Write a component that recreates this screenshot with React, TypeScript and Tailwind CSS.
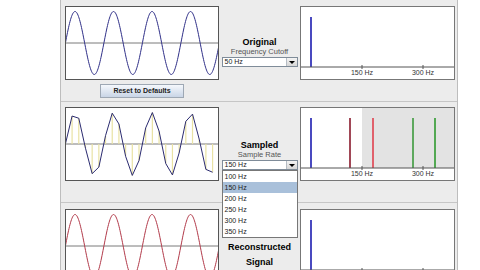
import React from 'react';

const PLOT_W = 154;
const PLOT_H = 74;
const PERIOD = 38.5;
const AMP = 31.5;

function sineAt(x: number) {
  return PLOT_H / 2 - AMP * Math.sin((2 * Math.PI * (x - 0.4)) / PERIOD);
}

function sinePoints() {
  const pts: string[] = [];
  for (let x = 0; x <= PLOT_W; x += 0.5) {
    pts.push(`${x.toFixed(1)},${sineAt(x).toFixed(2)}`);
  }
  return pts.join(' ');
}

function WavePlot({ color, sampled }: { color: string; sampled?: boolean }) {
  const samples: { x: number; y: number }[] = [];
  if (sampled) {
    for (let k = 0; k * 6.69 <= PLOT_W - 4; k++) {
      const x = 0.4 + k * 6.69;
      samples.push({ x, y: sineAt(x) });
    }
  }
  return (
    <svg width={PLOT_W} height={PLOT_H} className="block bg-white">
      <line x1={0} y1={PLOT_H / 2} x2={PLOT_W} y2={PLOT_H / 2} stroke="#7a7a7a" strokeWidth={1} />
      {sampled ? (
        <>
          {samples.map((s, i) => (
            <line key={i} x1={s.x} y1={PLOT_H / 2} x2={s.x} y2={s.y} stroke="#e9e2a4" strokeWidth={1.2} />
          ))}
          <polyline
            points={samples.map((s) => `${s.x},${s.y}`).join(' ')}
            fill="none"
            stroke={color}
            strokeWidth={1}
          />
        </>
      ) : (
        <polyline points={sinePoints()} fill="none" stroke={color} strokeWidth={1} />
      )}
      <rect x={0.5} y={0.5} width={PLOT_W - 1} height={PLOT_H - 1} fill="none" stroke="#555" />
    </svg>
  );
}

type Spike = { x: number; color: string };

function Spectrum({ spikes, shaded, labels = true }: { spikes: Spike[]; shaded?: boolean; labels?: boolean }) {
  const w = 155;
  const h = 74;
  const axis = 61;
  return (
    <svg width={w} height={h} className="block bg-white">
      {shaded && <rect x={62} y={1} width={w - 63} height={axis - 1} fill="#e3e3e3" />}
      {spikes.map((s, i) => (
        <line key={i} x1={s.x} y1={11} x2={s.x} y2={axis} stroke={s.color} strokeWidth={1.6} />
      ))}
      <line x1={0} y1={axis} x2={w} y2={axis} stroke="#555" strokeWidth={1} />
      <line x1={62} y1={axis - 2} x2={62} y2={axis + 2} stroke="#555" />
      <line x1={123} y1={axis - 2} x2={123} y2={axis + 2} stroke="#555" />
      {labels && (
        <>
          <text x={62} y={69} fontSize={7} textAnchor="middle" fill="#333" fontFamily="Liberation Sans, Arial, sans-serif">
            150 Hz
          </text>
          <text x={123} y={69} fontSize={7} textAnchor="middle" fill="#333" fontFamily="Liberation Sans, Arial, sans-serif">
            300 Hz
          </text>
        </>
      )}
      <rect x={0.5} y={0.5} width={w - 1} height={h - 1} fill="none" stroke="#777" />
    </svg>
  );
}

function Dropdown({ value }: { value: string }) {
  return (
    <div className="flex h-[10px] w-[76px] items-stretch border border-[#7f8c99] bg-white">
      <span className="flex-1 pl-[2px] text-[7px] leading-[8px] text-[#222]">{value}</span>
      <span className="flex w-[11px] items-center justify-center border-l border-[#b5bcc4] bg-gradient-to-b from-[#f4f4f4] to-[#d6d6d6]">
        <span className="h-0 w-0 border-x-[3px] border-t-[3px] border-x-transparent border-t-black" />
      </span>
    </div>
  );
}

const rates = ['100 Hz', '150 Hz', '200 Hz', '250 Hz', '300 Hz', '350 Hz'];

export default function App() {
  return (
    <div className="h-[270px] overflow-hidden bg-white font-['Liberation_Sans',Arial,sans-serif]">
      <div className="ml-[60px] w-[398px] border-x border-[#bdbdbd] bg-[#ececec]">
        {/* Original */}
        <div className="flex h-[102px] border-b border-[#c6c6c6] pt-[6px]">
          <div className="ml-[4px] flex w-[154px] flex-col items-center">
            <WavePlot color="#2f2f88" />
            <button className="mt-[4px] h-[14px] w-[84px] border border-[#9ea8b4] bg-gradient-to-b from-[#f5f8fc] to-[#c9d5e6] text-[7px] font-bold text-[#222]">
              Reset to Defaults
            </button>
          </div>
          <div className="flex w-[81px] flex-col items-center pt-[31px]">
            <div className="text-[9px] leading-[10px] font-bold text-black">Original</div>
            <div className="mt-[1px] text-[7.5px] leading-[8px] text-[#555]">Frequency Cutoff</div>
            <div className="mt-[1px]">
              <Dropdown value="50 Hz" />
            </div>
          </div>
          <Spectrum spikes={[{ x: 11, color: '#1c1cb0' }]} />
        </div>

        {/* Sampled */}
        <div className="flex h-[101px] border-b border-[#c6c6c6] pt-[5px]">
          <div className="ml-[4px] w-[154px]">
            <WavePlot color="#2b2b70" sampled />
          </div>
          <div className="flex w-[81px] flex-col items-center pt-[33px]">
            <div className="text-[9px] leading-[10px] font-bold text-black">Sampled</div>
            <div className="mt-[1px] text-[7.5px] leading-[8px] text-[#555]">Sample Rate</div>
            <div className="relative mt-[1px]">
              <Dropdown value="150 Hz" />
              <div className="absolute left-0 top-[10px] z-10 w-[76px] border border-[#777] bg-white">
                {rates.map((r) => (
                  <div
                    key={r}
                    className={`h-[11px] pl-[2px] text-[7px] leading-[11px] text-[#222] ${
                      r === '150 Hz' ? 'bg-[#a9c0da]' : ''
                    }`}
                  >
                    {r}
                  </div>
                ))}
              </div>
            </div>
          </div>
          <Spectrum
            shaded
            spikes={[
              { x: 11, color: '#1c1cb0' },
              { x: 50, color: '#8a1a2c' },
              { x: 73, color: '#e0404e' },
              { x: 113, color: '#3d9a3d' },
              { x: 135, color: '#2f9a2f' },
            ]}
          />
        </div>

        {/* Reconstructed */}
        <div className="flex h-[80px] pt-[6px]">
          <div className="ml-[4px] w-[154px]">
            <WavePlot color="#b23a4a" />
          </div>
          <div className="flex w-[81px] flex-col items-center pt-[31px]">
            <div className="text-[9px] leading-[15px] font-bold text-black">Reconstructed</div>
            <div className="text-[9px] leading-[14px] font-bold text-black">Signal</div>
          </div>
          <Spectrum labels={false} spikes={[{ x: 11, color: '#1c1cb0' }]} />
        </div>
      </div>
    </div>
  );
}
